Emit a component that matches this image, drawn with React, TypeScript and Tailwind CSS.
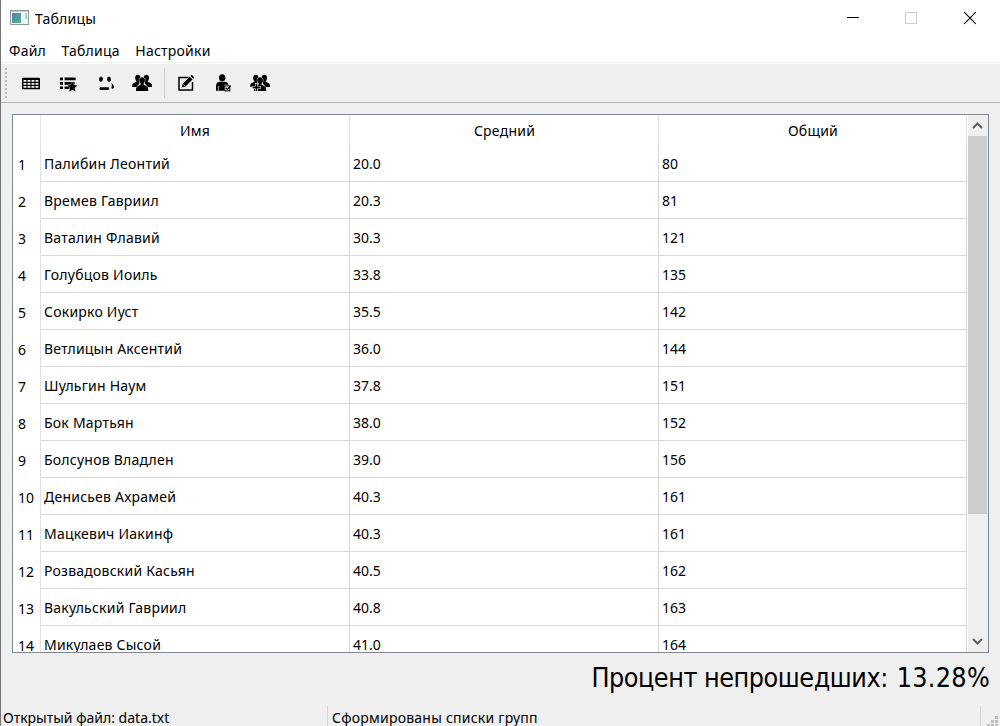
import type { ReactNode } from "react";

type Row = [string, string, string];

const rows: Row[] = [
  ["Палибин Леонтий", "20.0", "80"],
  ["Времев Гавриил", "20.3", "81"],
  ["Ваталин Флавий", "30.3", "121"],
  ["Голубцов Иоиль", "33.8", "135"],
  ["Сокирко Иуст", "35.5", "142"],
  ["Ветлицын Аксентий", "36.0", "144"],
  ["Шульгин Наум", "37.8", "151"],
  ["Бок Мартьян", "38.0", "152"],
  ["Болсунов Владлен", "39.0", "156"],
  ["Денисьев Ахрамей", "40.3", "161"],
  ["Мацкевич Иакинф", "40.3", "161"],
  ["Розвадовский Касьян", "40.5", "162"],
  ["Вакульский Гавриил", "40.8", "163"],
  ["Микулаев Сысой", "41.0", "164"],
];

function Icon({ children }: { children: ReactNode }) {
  return (
    <svg width="20" height="20" viewBox="0 0 20 20" className="shrink-0">
      {children}
    </svg>
  );
}

function AppIcon() {
  return (
    <svg width="19" height="16" viewBox="0 0 19 16" className="shrink-0">
      <defs>
        <linearGradient id="pane" x1="0" y1="0" x2="1" y2="1">
          <stop offset="0" stopColor="#4a80a8" />
          <stop offset="1" stopColor="#58b38b" />
        </linearGradient>
      </defs>
      <rect x="0.5" y="0.5" width="18" height="14" fill="#f7f9fa" stroke="#8d979e" />
      <rect x="1" y="1" width="17" height="1" fill="#c3ccd3" />
      <rect x="2" y="3" width="9" height="10" fill="url(#pane)" />
      <rect x="12" y="3" width="3" height="10" fill="#eef2f5" />
      <rect x="15.5" y="3" width="1.5" height="6" fill="#86cfa9" />
    </svg>
  );
}

function TableIcon() {
  return (
    <Icon>
      <rect x="1" y="4.7" width="18" height="11.6" rx="0.6" />
      <g fill="#efefef">
        {[7, 10, 13].map((y) =>
          [2.5, 6.5, 10.5, 14.5].map((x) => (
            <rect key={`${x}-${y}`} x={x} y={y} width="2.900" height="1.800" />
          )),
        )}
      </g>
    </Icon>
  );
}

function ListStarIcon() {
  return (
    <Icon>
      <path
        d="M2 4.500h3v2.700H2zM6.600 4.500h11v2.700h-11zM2 9h3v2.700H2zM6.600 9h10v2.700h-10zM2 13.500h3v2.600H2zM6.600 13.500h5v2.600h-5z"
      />
      <path
        d="M14.400 8.800l1.400 3.300 3.600.4-2.700 2.400.8 3.600-3.100-1.800-3.100 1.800.8-3.600-2.700-2.400 3.600-.4z"
        stroke="#efefef"
        strokeWidth="0.6"
        paintOrder="stroke"
      />
    </Icon>
  );
}

function SweatFaceIcon() {
  return (
    <Icon>
      <ellipse cx="6" cy="6.200" rx="1.900" ry="2.600" transform="rotate(8 6 6.2)" />
      <ellipse cx="14" cy="6.200" rx="1.900" ry="2.600" transform="rotate(-8 14 6.2)" />
      <rect x="4.500" y="14.200" width="9.700" height="2.800" rx="1.300" />
      <path d="M16.200 9.800c1.300 1 3.100 2.800 2.900 4.400-.2 1.500-2.100 1.900-2.800.8.800-1.700.8-3.200-.1-5.200z" />
    </Icon>
  );
}

function GroupShape() {
  return (
    <g>
      <ellipse cx="5.800" cy="5" rx="2.600" ry="3.200" />
      <ellipse cx="14.400" cy="5" rx="2.600" ry="3.200" />
      <path d="M.3 14v-1.500c0-1.600.6-2.200 2-2.800l2.200-1V7h3v3.200L4.600 14z" />
      <path d="M19.900 14v-1.500c0-1.600-.6-2.200-2-2.800l-2.200-1V7h-3v3.200l2.900 3.800z" />
      <path
        d="M10.100 4.200c1.900 0 2.900 1.400 2.800 3.300-.1 1.300-.6 2.300-1.300 3v1.300l2.600 1.200c1.600.8 2 1.700 2 5H4c0-3.300.4-4.200 2-5l2.600-1.200v-1.300c-.7-.7-1.200-1.700-1.300-3-.1-1.900.9-3.300 2.800-3.300z"
        stroke="#efefef"
        strokeWidth="1"
        paintOrder="stroke"
      />
    </g>
  );
}

function GroupIcon() {
  return (
    <Icon>
      <GroupShape />
    </Icon>
  );
}

function EditIcon() {
  return (
    <Icon>
      <path d="M12.5 4.500H3V17h13.500V9" fill="none" stroke="#000" strokeWidth="1.5" />
      <path d="M5.7 14.4l1-3.7 7-7 2.8 2.7-7 7z" />
      <path d="M14.5 2.9l1.2-1.1 2.7 2.7-1.1 1.2z" />
      <path d="M7.2 11.3l1.7 1.7" stroke="#efefef" strokeWidth="0.7" />
    </Icon>
  );
}

function PersonCheckIcon() {
  return (
    <Icon>
      <ellipse cx="9.200" cy="4.700" rx="3.200" ry="3.500" />
      <path d="M3 17.700v-4.500C3 10.200 4.400 9 6.500 8.800h5.200c2 0 3.300 1 3.800 2.900h-4.200v6z" />
      <path d="M5.300 13v4.700" stroke="#efefef" strokeWidth="0.7" />
      <rect x="11.800" y="12.900" width="5" height="5" fill="#efefef" stroke="#000" />
      <path d="M12.900 15l1.400 1.400 3.400-3.700" fill="none" stroke="#000" strokeWidth="1.1" />
    </Icon>
  );
}

function GroupAddIcon() {
  return (
    <Icon>
      <GroupShape />
      <path d="M6.400 10v8.800M2 14.400h8.800" stroke="#efefef" strokeWidth="2.800" />
      <path d="M6.400 10.700v7.400M2.600 14.400h7.600" stroke="#000" strokeWidth="1.6" />
    </Icon>
  );
}

function TitleBar() {
  return (
    <header className="flex h-[36px] shrink-0 items-center bg-white pl-[9px]">
      <AppIcon />
      <span className="ml-[6px]">Таблицы</span>
      <svg width="130" height="14" viewBox="0 0 130 14" className="ml-auto mr-[23px]" fill="none">
        <path d="M0 6.5h12" stroke="#000" />
        <rect x="58.5" y="1.5" width="11" height="11" stroke="#cccccc" />
        <path d="M117.200 1.200l11.600 11.600M128.800 1.200L117.200 12.800" stroke="#000" strokeWidth="1.1" />
      </svg>
    </header>
  );
}

function ToolBar() {
  return (
    <div className="flex h-[39px] shrink-0 items-center border-b border-[#b6b6b6] pb-px pl-[4px]">
      <svg width="2" height="32" viewBox="0 0 2 32">
        <path d="M1 1v31" stroke="#bdbdbd" strokeWidth="2" strokeDasharray="2 2" />
      </svg>
      <div className="ml-[14px] flex items-center gap-[17px]">
        <TableIcon />
        <ListStarIcon />
        <SweatFaceIcon />
        <GroupIcon />
      </div>
      <div className="mr-[11px] ml-[12px] h-[30px] w-px bg-[#d0d0d0]" />
      <div className="flex items-center gap-[17px]">
        <EditIcon />
        <PersonCheckIcon />
        <GroupAddIcon />
      </div>
    </div>
  );
}

function ScrollBar() {
  return (
    <div className="ml-px flex w-[20px] shrink-0 flex-col bg-[#efefef] pr-px">
      <svg width="19" height="21" viewBox="0 0 19 21">
        <path d="M5 13l4.5-4.5L14 13" fill="none" stroke="#606060" strokeWidth="2" />
      </svg>
      <div className="h-[378px] bg-[#cdcdcd]" />
      <svg width="19" height="21" viewBox="0 0 19 21" className="mt-auto">
        <path d="M5 8l4.5 4.5L14 8" fill="none" stroke="#606060" strokeWidth="2" />
      </svg>
    </div>
  );
}

function DataTable() {
  return (
    <div className="ml-[11px] mt-[11px] flex h-[539px] w-[977px] shrink-0 overflow-hidden border border-[#828790] bg-white">
      <div className="w-[954px] shrink-0">
        <div className="grid h-[30px] grid-cols-[28px_309px_309px_308px] grid-rows-[30px] text-center leading-[32px]">
          <div className="border-r border-[#e5e5e5]" />
          <div className="border-r border-[#e5e5e5]">Имя</div>
          <div className="border-r border-[#e5e5e5] pl-px">Средний</div>
          <div className="border-r border-[#e5e5e5] pl-px">Общий</div>
        </div>
        {rows.map(([name, average, total], i) => (
          <div
            key={name}
            className="grid h-[37px] grid-cols-[28px_309px_309px_308px] grid-rows-[37px] leading-[37px]"
          >
            <div className="border-r border-[#e0e0e0] pl-[5px] leading-[39px] tracking-normal">{i + 1}</div>
            <div className="border-r border-b border-[#d8d8d8] pl-[3px]">{name}</div>
            <div className="border-r border-b border-[#d8d8d8] pl-[3px] tracking-normal">{average}</div>
            <div className="border-r border-b border-[#d8d8d8] pl-[3px] tracking-normal">{total}</div>
          </div>
        ))}
      </div>
      <ScrollBar />
    </div>
  );
}

function StatusBar() {
  return (
    <footer className="flex h-[20px] shrink-0 overflow-hidden leading-[24px]">
      <div className="w-[326px] pl-[2px] tracking-normal">Открытый файл: data.txt</div>
      <div className="w-px bg-[#d5d5d5]" />
      <div className="w-[652px] pl-[4px]">Сформированы списки групп</div>
      <div className="w-px bg-[#d5d5d5]" />
      <svg width="12" height="12" viewBox="0 0 12 12" className="ml-[6px] mt-[9px]">
        <path d="M8 1h3v3H8zM4 5h3v3H4zM8 5h3v3H8zM0 9h3v3H0zM4 9h3v3H4zM8 9h3v3H8z" fill="#bdbdbd" />
      </svg>
    </footer>
  );
}

export default function App() {
  return (
    <div className="flex h-[726px] w-[1000px] flex-col overflow-hidden border-l border-[#747474] bg-[#efefef] font-['Noto_Sans','Open_Sans',sans-serif] text-[14px] tracking-[0.23px] text-black">
      <TitleBar />
      <nav className="flex h-[26px] shrink-0 gap-[15.500px] bg-white pl-[8px] leading-[29px]">
        <span>Файл</span>
        <span>Таблица</span>
        <span>Настройки</span>
      </nav>
      <div className="h-[2px] shrink-0 border-t border-[#f0f0f0] bg-white" />
      <ToolBar />
      <DataTable />
      <div className="flex h-[53px] shrink-0 justify-end gap-[9px] pr-[10px] font-['DejaVu_Sans_Condensed','DejaVu_Sans',sans-serif] text-[26.67px] leading-[50px] tracking-[-0.45px]">
        <span>Процент непрошедших:</span>
        <span className="tracking-[0.3px]">13.28%</span>
      </div>
      <StatusBar />
    </div>
  );
}
